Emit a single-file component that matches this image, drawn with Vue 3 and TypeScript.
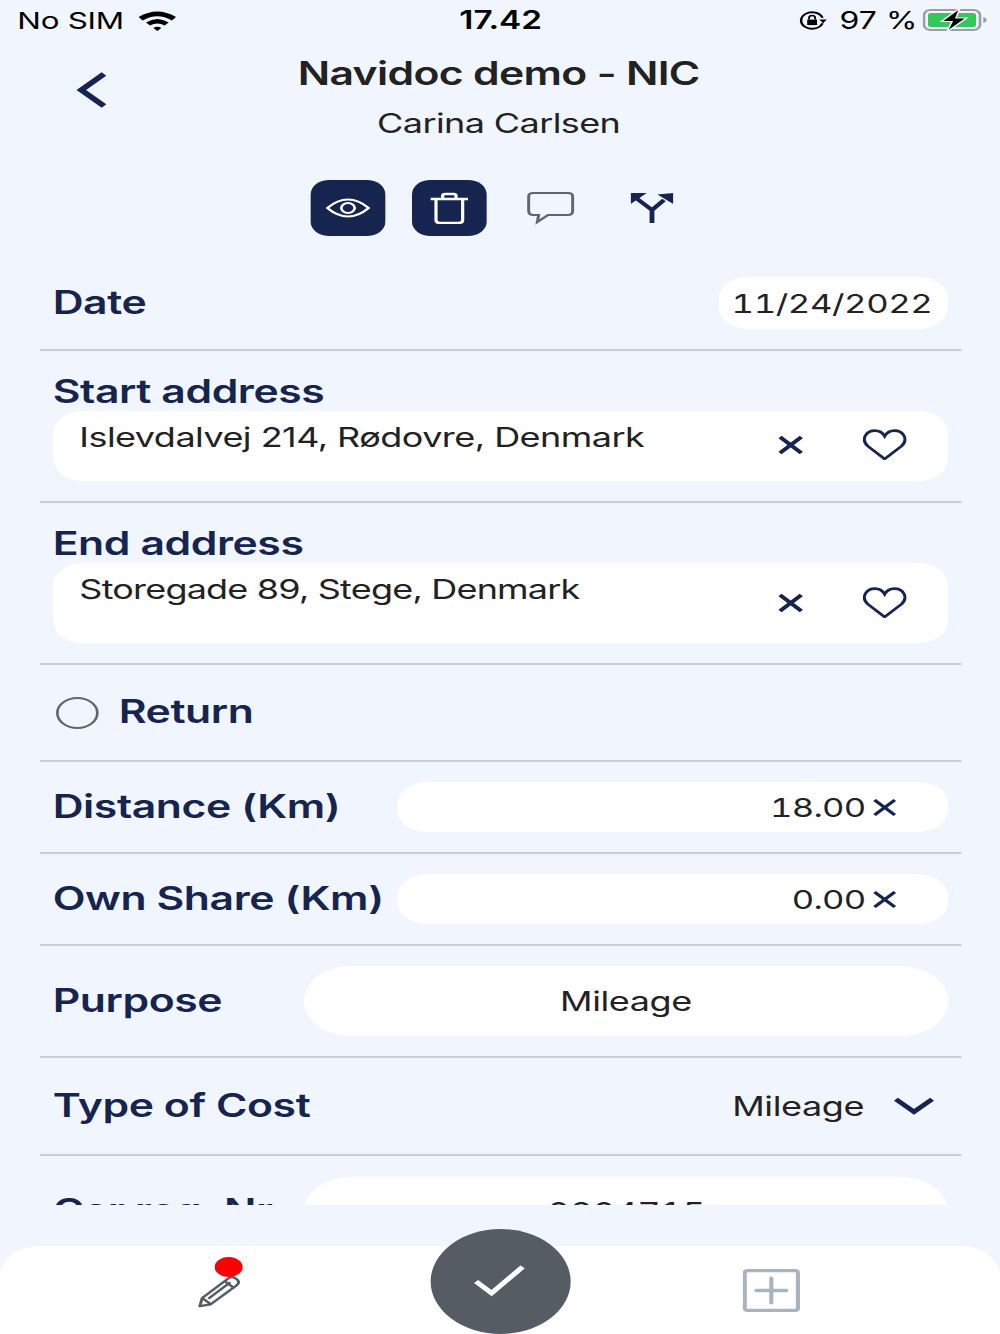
<script setup lang="ts">
const pencil = "M2 34 L4 25 L25 4 Q28 1 31 3.500 L33 5.500 Q35 8.500 32 11.500 L11 32 Z M4 25 L11 32 M9 26 L27 8 M22 6.500 L30 14"
const cross = "M2 2 L18 18 M18 2 L2 18"
const heart = "M17 27 L4 15.500 C-2 9 3 1.500 9.500 1.500 C13 1.500 15.500 3.500 17 6.500 C18.500 3.500 21 1.500 24.500 1.500 C31 1.500 36 9 30 15.500 Z"
</script>

<template>
  <div class="stage">
    <header class="status">
      <div class="st-left">
        <span>No SIM</span>
        <svg class="wifi" viewBox="0 0 30 22" width="30" height="22">
          <path d="M1 8 Q15 -3 29 8 L26 11.500 Q15 3 4 11.500 Z M6.500 13.500 Q15 6.500 23.500 13.500 L20.500 16.500 Q15 12.500 9.500 16.500 Z M12 19 Q15 16.500 18 19 L15 22 Z" fill="#000"/>
        </svg>
      </div>
      <span class="st-time">17.42</span>
      <div class="st-right">
        <svg class="lock" viewBox="0 0 24 22" width="22" height="21" fill="none" stroke="#000" stroke-width="2">
          <path d="M19.500 14 A9 9 0 1 1 19.500 8"/>
          <path d="M17 10 L23 10 L20 14 Z" fill="#000" stroke="none"/>
          <rect x="7" y="10" width="8" height="6" fill="#000" stroke="none"/>
          <path d="M8.500 10 V8 a2.500 2.500 0 0 1 5 0 V10" stroke-width="1.500"/>
        </svg>
        <span>97 %</span>
        <svg class="battery" viewBox="0 0 49 24" width="49" height="24">
          <rect x="1" y="2" width="42" height="20" rx="5" fill="none" stroke="#9a9ea3" stroke-width="2"/>
          <rect x="4" y="5" width="36" height="14" rx="2" fill="#34c759"/>
          <path d="M45.500 9 Q48 10 48 12 Q48 14 45.500 15 Z" fill="#9a9ea3"/>
          <path d="M28 0 L14 13.500 H22 L18 24 L33 10 H25 Z" fill="#000" stroke="#f1f5fe" stroke-width="1.200"/>
        </svg>
      </div>
    </header>

    <div class="head">
      <svg class="back" viewBox="0 0 24 38" width="24" height="38" fill="none" stroke="#16254f" stroke-width="5">
        <path d="M21 3 L4 19 L21 35"/>
      </svg>
      <h1>Navidoc demo - NIC</h1>
      <p>Carina Carlsen</p>
    </div>

    <div class="actions">
      <button class="act filled">
        <svg viewBox="0 0 34 22" width="34" height="22" fill="none" stroke="#fff" stroke-width="2">
          <path d="M1.500 11 Q17 -6 32.500 11 Q17 28 1.500 11 Z"/>
          <circle cx="17" cy="11" r="5"/>
        </svg>
      </button>
      <button class="act filled">
        <svg viewBox="0 0 30 32" width="32" height="32" fill="none" stroke="#fff" stroke-width="2.400" stroke-linejoin="round">
          <path d="M1 7 H29"/>
          <path d="M10 6 V3.500 Q10 2 12 2 H18 Q20 2 20 3.500 V6"/>
          <path d="M5 7 V28 Q5 31 8 31 H22 Q25 31 25 28 V7"/>
        </svg>
      </button>
      <button class="act">
        <svg viewBox="0 0 36 34" width="36" height="34" fill="none" stroke="#5f666e" stroke-width="2.200">
          <path d="M5 2 H31 Q34.500 2 34.500 5.500 V20 Q34.500 24 31 24 H16 L8 31 L9 24 H5 Q1.500 24 1.500 20 V5.500 Q1.500 2 5 2 Z"/>
        </svg>
      </button>
      <button class="act">
        <svg viewBox="0 0 32 30" width="32" height="30" fill="none" stroke="#16254f" stroke-width="3.600">
          <path d="M16 30 V17 L5 6"/>
          <path d="M16 17 L25 7"/>
          <path d="M0 0 H12 L0 11 Z" fill="#16254f" stroke="none"/>
          <path d="M32 0 V11 L20 1.500 Z" fill="#16254f" stroke="none"/>
        </svg>
      </button>
    </div>

    <main class="form">
      <section class="row r-date">
        <label>Date</label>
        <div class="pill date">11/24/2022</div>
      </section>

      <section class="col c-start">
        <label>Start address</label>
        <div class="addr a-start">
          <span class="addr-text">Islevdalvej 214, Rødovre, Denmark</span>
          <svg class="x" viewBox="0 0 20 20" width="20" height="20"><path :d="cross" stroke="#16254f" stroke-width="3.400"/></svg>
          <svg class="heart" viewBox="0 0 34 28" width="33" height="31" preserveAspectRatio="none" fill="none" stroke="#16254f" stroke-width="2.400"><path :d="heart"/></svg>
        </div>
      </section>

      <section class="col c-end">
        <label>End address</label>
        <div class="addr a-end">
          <span class="addr-text">Storegade 89, Stege, Denmark</span>
          <svg class="x" viewBox="0 0 20 20" width="20" height="20"><path :d="cross" stroke="#16254f" stroke-width="3.400"/></svg>
          <svg class="heart" viewBox="0 0 34 28" width="33" height="31" preserveAspectRatio="none" fill="none" stroke="#16254f" stroke-width="2.400"><path :d="heart"/></svg>
        </div>
      </section>

      <section class="row r-return">
        <span class="radio"></span>
        <label>Return</label>
      </section>

      <section class="row r-num">
        <label>Distance (Km)</label>
        <div class="pill num">18.00<svg viewBox="0 0 20 20" width="19" height="19"><path :d="cross" stroke="#16254f" stroke-width="3"/></svg></div>
      </section>

      <section class="row r-num">
        <label>Own Share (Km)</label>
        <div class="pill num">0.00<svg viewBox="0 0 20 20" width="19" height="19"><path :d="cross" stroke="#16254f" stroke-width="3"/></svg></div>
      </section>

      <section class="row r-big">
        <label>Purpose</label>
        <div class="pill big">Mileage</div>
      </section>

      <section class="row r-type">
        <label>Type of Cost</label>
        <div class="select">
          <span>Mileage</span>
          <svg viewBox="0 0 32 20" width="31" height="20" fill="none" stroke="#16254f" stroke-width="4.400"><path d="M2 3 L16 16 L30 3"/></svg>
        </div>
      </section>

      <section class="row r-big last">
        <label>Car reg. Nr.</label>
        <div class="pill big plate">0204715</div>
      </section>
    </main>

    <footer class="bar">
      <div class="tab t-edit">
        <span class="dot"></span>
        <svg viewBox="0 0 36 36" width="33" height="33" fill="none" stroke="#565c64" stroke-width="2.400" stroke-linejoin="round"><path :d="pencil"/></svg>
      </div>
      <button class="fab">
        <svg viewBox="0 0 40 34" width="39" height="33" fill="none" stroke="#fff" stroke-width="4.500"><path d="M2 18 L14 30 L38 3"/></svg>
      </button>
      <div class="tab t-add">
        <svg viewBox="0 0 44 42" width="43" height="43" preserveAspectRatio="none" fill="none" stroke="#a9b3c1" stroke-width="3.200" stroke-linecap="round">
          <rect x="1.600" y="1.600" width="40.800" height="38.800" rx="2"/>
          <path d="M22 9 V33 M10.500 21 H33.500"/>
        </svg>
      </div>
    </footer>
  </div>
</template>

<style>
html, body { margin: 0; background: #f1f5fe; overflow: hidden; }
</style>

<style scoped>
/* The reference is a 750-wide phone capture stretched to 1000 wide. */
.stage {
  width: 750px;
  height: 1334px;
  transform: scaleX(1.33333);
  transform-origin: 0 0;
  background: #f1f5fe;
  font-family: Inter, "Liberation Sans", sans-serif;
  color: #222;
  display: flex;
  flex-direction: column;
  position: relative;
  overflow: hidden;
}
button { border: 0; padding: 0; background: none; display: flex; align-items: center; justify-content: center; }
.status {
  height: 40px;
  padding: 0 9px 0 13px;
  display: flex;
  align-items: center;
  justify-content: space-between;
  font-size: 24px;
  color: #000;
}
.st-left, .st-right { display: flex; align-items: center; width: 200px; }
.st-left { gap: 10px; }
.st-left span { font-size: 23.500px; letter-spacing: -0.2px; }
.st-right { gap: 9px; justify-content: flex-end; }
.battery { margin-left: -5px; }
.st-time { font-weight: 600; font-size: 25px; margin-right: 3px; }

.head {
  position: relative;
  height: 140px;
  text-align: center;
  padding-top: 14px;
  box-sizing: border-box;
}
.back { position: absolute; left: 57px; top: 31px; }
h1 { margin: 0 2px 0 0; font-size: 32px; line-height: 40px; font-weight: 600; letter-spacing: -0.5px; color: #222; }
p { margin: 10px 2px 0 0; font-size: 27px; line-height: 40px; letter-spacing: -0.45px; color: #222; }

.actions {
  height: 56px;
  display: flex;
  justify-content: center;
  gap: 20px;
  padding-right: 1px;
}
.act { width: 56px; height: 56px; border-radius: 14px; }
.filled { background: #16254f; }

.form {
  height: 964px;
  margin-top: 5px;
  padding: 0 29px 0 29.500px;
  overflow: hidden;
  flex: none;
  box-sizing: border-box;
}
section { border-bottom: 2px solid #cacdd2; box-sizing: border-box; padding: 0 10px; }
label { font-size: 32px; font-weight: 600; color: #16254f; line-height: 40px; letter-spacing: -0.3px; white-space: nowrap; }
.row { display: flex; align-items: center; justify-content: space-between; }
.col { display: flex; flex-direction: column; }

.pill {
  background: #fff;
  font-size: 27px;
  letter-spacing: -0.3px;
  color: #222;
  box-sizing: border-box;
  display: flex;
  align-items: center;
  flex: none;
}
.r-date { height: 110px; padding-top: 16px; }
.date { height: 52px; width: 172px; border-radius: 22px; justify-content: center; font-size: 26px; letter-spacing: -0.3px; font-feature-settings: "tnum"; padding-right: 2px; }
.c-start { height: 152px; padding-top: 21px; }
.c-end { height: 162px; padding-top: 21px; }
.c-start label, .c-end label { margin-bottom: -1px; }
.addr {
  background: #fff;
  border-radius: 22px;
  position: relative;
  font-size: 27px;
  letter-spacing: -0.4px;
  color: #222;
  padding: 9px 20px;
  box-sizing: border-box;
}
.a-start { height: 70px; }
.a-end { height: 80px; letter-spacing: -0.6px; }
.addr-text { line-height: 36px; display: block; }
.x { position: absolute; left: 543.500px; top: 24px; }
.heart { position: absolute; left: 607.500px; top: 18px; }
.a-end .x { top: 30px; }
.a-end .heart { top: 24px; }

.r-return { height: 97px; justify-content: flex-start; gap: 15.500px; }
.r-return label { margin-top: -2px; }
.radio { width: 28px; height: 28px; border: 2.500px solid #5f666e; border-radius: 50%; margin-left: 2px; flex: none; }
.r-num { height: 92px; }
.num { width: 413px; height: 50px; border-radius: 22px; justify-content: flex-end; padding-right: 38px; gap: 5px; font-size: 26px; letter-spacing: -0.6px; font-feature-settings: "tnum"; }
.r-big { height: 112px; }
.big { width: 483px; height: 70px; border-radius: 35px; justify-content: center; }
.plate { font-feature-settings: "tnum"; letter-spacing: -0.6px; }
.r-type { height: 98px; }
.select { display: flex; align-items: center; gap: 22px; font-size: 27px; letter-spacing: -0.3px; color: #222; padding-right: 10px; }
.last { height: 120px; align-items: flex-start; padding-top: 21px; }
.last label { margin-top: 14px; }

.bar {
  position: absolute;
  left: 0;
  right: 0;
  bottom: 0;
  height: 88px;
  background: #fff;
  border-radius: 30px 30px 0 0;
  display: flex;
  align-items: center;
}
.tab { position: relative; display: flex; flex: none; }
.t-edit { margin-left: 148px; margin-top: 2px; }
.t-add { margin-left: 376px; margin-top: 0; }
.dot { position: absolute; left: 13px; top: -18px; width: 21px; height: 20px; border-radius: 50%; background: #f00; }
.fab {
  position: absolute;
  left: 323px;
  top: -17px;
  width: 105px;
  height: 105px;
  border-radius: 50%;
  background: #565c64;
  padding-right: 2px;
  padding-bottom: 2px;
  box-sizing: border-box;
}
</style>
